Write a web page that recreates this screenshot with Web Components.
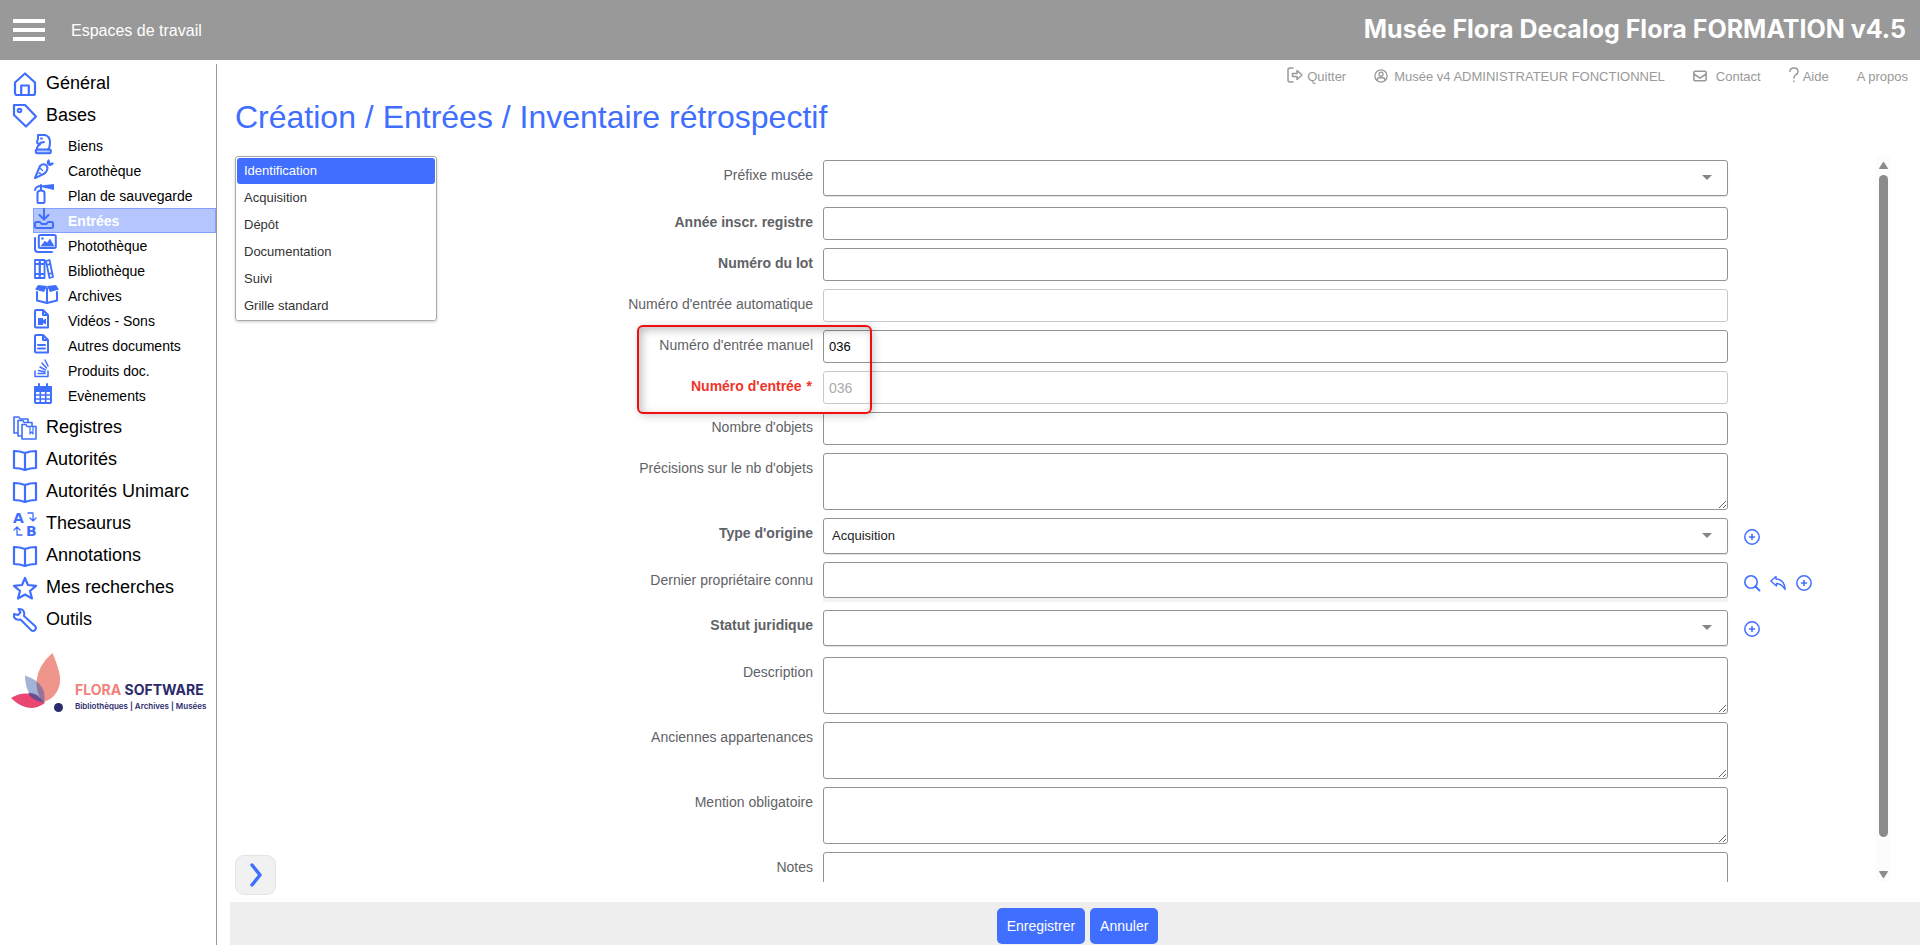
<!DOCTYPE html>
<html lang="fr">
<head>
<meta charset="utf-8">
<title>Création / Entrées / Inventaire rétrospectif</title>
<style>
    html, body {
        height: 100%;
        margin: 0;
    }

    body {
        font-family: "Liberation Sans", Arial, sans-serif;
        font-size: 14px;
        color: #000;
        background: #fff;
        --blue: #406eff;
        --grey: #999;
    }
</style>
</head>
<body>

<flora-app>
    <flora-header slot="header" workspace="Espaces de travail">Musée Flora Decalog Flora FORMATION v4.5</flora-header>

    <flora-menu slot="menu">
        <menu-entry icon="home">Général</menu-entry>
        <menu-entry icon="tag">Bases</menu-entry>
        <menu-group>
            <menu-item icon="knight">Biens</menu-item>
            <menu-item icon="carrot">Carothèque</menu-item>
            <menu-item icon="extinguisher">Plan de sauvegarde</menu-item>
            <menu-item icon="inbox" active>Entrées</menu-item>
            <menu-item icon="images">Photothèque</menu-item>
            <menu-item icon="books">Bibliothèque</menu-item>
            <menu-item icon="box">Archives</menu-item>
            <menu-item icon="filevideo">Vidéos - Sons</menu-item>
            <menu-item icon="filetext">Autres documents</menu-item>
            <menu-item icon="stack">Produits doc.</menu-item>
            <menu-item icon="calendar">Evènements</menu-item>
        </menu-group>
        <menu-entry icon="registers">Registres</menu-entry>
        <menu-entry icon="book">Autorités</menu-entry>
        <menu-entry icon="book">Autorités Unimarc</menu-entry>
        <menu-entry icon="thesaurus">Thesaurus</menu-entry>
        <menu-entry icon="book">Annotations</menu-entry>
        <menu-entry icon="star">Mes recherches</menu-entry>
        <menu-entry icon="wrench">Outils</menu-entry>
        <flora-logo></flora-logo>
    </flora-menu>

    <user-links slot="links"></user-links>

    <span slot="title">Création / Entrées / Inventaire rétrospectif</span>

    <tab-list slot="tabs"></tab-list>

    <form-scroll slot="form">
        <form-field type="select" loose>Préfixe musée</form-field>
        <form-field strong>Année inscr. registre</form-field>
        <form-field strong>Numéro du lot</form-field>
        <form-field disabled>Numéro d'entrée automatique</form-field>
        <field-callout>
            <form-field value="036">Numéro d'entrée manuel</form-field>
            <form-field value="036" strong disabled required>Numéro d'entrée</form-field>
        </field-callout>
        <form-field>Nombre d'objets</form-field>
        <form-field type="textarea">Précisions sur le nb d'objets</form-field>
        <form-field type="select" value="Acquisition" actions="plus" strong>Type d'origine</form-field>
        <form-field type="lookup" actions="search reply plus">Dernier propriétaire connu</form-field>
        <form-field type="select" actions="plus" strong loose>Statut juridique</form-field>
        <form-field type="textarea">Description</form-field>
        <form-field type="textarea">Anciennes appartenances</form-field>
        <form-field type="textarea">Mention obligatoire</form-field>
        <form-field type="textarea">Notes</form-field>
    </form-scroll>

    <form-actions slot="footer"></form-actions>
</flora-app>

<script>
    // every icon is drawn with currentColor
    const ICONS = {
        home: ['0 0 24 24', '<path d="M2 10.5 12 1.5l10 9V21a2 2 0 0 1-2 2H4a2 2 0 0 1-2-2z" stroke-width="2.2"/><path d="M8.2 23v-9.500h7.6V23" stroke-width="2.2"/>'],
        tag: ['0 0 24 24', '<path d="M1 1h11l11 11.500L13 22.500 1 11z" stroke-width="2.200"/><circle cx="6.500" cy="6.500" r="1.800"/>'],
        registers: ['0 0 24 24', '<g fill="#fff" stroke-width="1.600"><path d="M1 1h5l1 2h8v14H1z"/><path d="M5 4.500h5l1 2h8V20H5z"/><path d="M9 8.500h4l1 2h9V23H9z"/><path d="M17 11v7l1.500-2 1.500 2v-7" stroke-width="1.200"/></g>'],
        book: ['0 0 24 24', '<path d="M1 3q6 0 11 2 5-2 11-2v17q-6 0-11 2-5-2-11-2zM12 5v17" stroke-width="2.200"/>'],
        thesaurus: ['0 0 24 24', '<g fill="currentColor" stroke="none" font-family="DejaVu Sans" font-weight="bold" font-size="14"><text x="0" y="11">A</text><text x="13" y="24">B</text></g><path d="M15 1h5v8m-3-3 3 3 3-3M9 23H4v-8m-3 3 3-3 3 3" stroke-width="1.300"/>'],
        star: ['0 0 24 24', '<path d="m12 2 3 7 8 .8-6 5.200 2 7.500-7-4-7 4 2-7.500-6-5.200L9 9z" stroke-width="2.200"/>'],
        wrench: ['0 0 24 24', '<path d="M1 6v3q2 3.500 6.500 2.500L18 22q2 2 4 0t0-4L11 8Q12 3.500 9 1.500L5.500 1l2 3.500L5 7z" stroke-width="2"/>'],
        knight: ['0 0 24 20', '<path d="M3 15.500q-.5-3 3-5-3-.5-3-3l1-2.500V1h7q5 1.500 5 7t-2 7.500"/><path d="m6 9 4-1M7 4.500h1"/><rect x="1.800" y="15.500" width="15" height="3.700" rx="1" fill="currentColor" fill-opacity=".35"/>'],
        carrot: ['0 0 24 20', '<path d="M1 19 6 7q3-3 6-1 3 3 0 7-2 2-4.500 3.200z"/><path d="m6 9 2.500 2.500M5 14l2 1" stroke-width="1.400"/><path d="M13 5q-1-3 2-5 1 2 1 4 2-1 4 0-1 3-5 3z" fill="currentColor" stroke="none"/>'],
        extinguisher: ['0 0 24 20', '<path d="M3.500 18V9q0-2.500 3.500-2.500T10.500 9v9q0 1-1 1h-5q-1 0-1-1zM7 6.500V1M1 6q1-4 6-4"/><path d="M7 1.500 20 0v6L7 3z" fill="currentColor" stroke="none"/>'],
        inbox: ['0 0 24 20', '<path d="M10 0v10M5.500 6l4.500 4.500L14.500 6"/><path d="M6 13H2.500Q1 13 1 14.500V18q0 1 1.500 1h15q1.500 0 1.500-1v-3.500Q19 13 17.500 13H14l-1.500 2h-5z"/>'],
        images: ['0 0 24 20', '<path d="M1 4v11q0 3 3 3h14"/><rect x="4.800" y="1" width="17" height="13" rx="1.500"/><path d="m7 12 4-5 2 2 3-4 4 7z" fill="currentColor" stroke-width=".5"/><circle cx="8.500" cy="4.500" r="1.200" fill="currentColor" stroke="none"/>'],
        books: ['0 0 24 20', '<path d="M1 1h4.500v18H1zM6 1h4.500v18H6zM12 2l3.500-1 3.500 17-3.500 1zM1 5h9M1 15h9M13 6l3-.8M15 15l3-.8" stroke-width="1.800"/>'],
        box: ['0 0 24 20', '<path d="M3 8v8.500L13 19l10-2.500V8M13 4v15"/><path d="m4 1 9 1-3 6-9-2.500zM22 1l-9 1 3 6 9-2.500z" fill="currentColor" stroke="none"/>'],
        filevideo: ['0 0 24 20', '<path d="M2 1h7l5 5v12.500H2q-1 0-1-1V2q0-1 1-1zM9 1v5h5"/><path d="M4 9h5v2l3-1.500v6L9 14v2H4z" fill="currentColor" stroke="none"/>'],
        filetext: ['0 0 24 20', '<path d="M2 1h7l5 5v12.500H2q-1 0-1-1V2q0-1 1-1zM9 1v5h5M4 11h7M4 14.500h7"/>'],
        stack: ['0 0 24 20', '<path d="M1 12v5.500h13V12M4 14.500h7M4.500 11.500l6.500 1.500M6 8l5.500 3M8 4l4.500 5M11 1l3 6" stroke-width="1.500"/>'],
        calendar: ['0 0 24 20', '<path d="M5 0v4M13 0v4"/><rect x="1" y="3" width="16" height="16" rx="1"/><path d="M1 3h16v4H1z" fill="currentColor"/><path d="M1 11h16M1 15h16M6.300 5v14M11.700 5v14" stroke-width="1.600"/>'],
        quit: ['0 0 16 16', '<path d="M6 1H3Q1 1 1 3v10q0 2 2 2h3" stroke-width="1.500"/><path d="M5.500 6.500H10v-3L15 8l-5 4.500v-3H5.500z" stroke-width="1.500"/>'],
        user: ['0 0 16 16', '<circle cx="8" cy="8" r="7" stroke-width="1.500"/><circle cx="8" cy="6" r="2.300" stroke-width="1.500"/><path d="M3.500 13q0-3 2.500-3h4q2.500 0 2.500 3" stroke-width="1.500"/>'],
        mail: ['0 0 16 16', '<rect x="1" y="2.500" width="14" height="11" rx="1.500" stroke-width="1.800"/><path d="m1.500 6 6.500 4.500L14.500 6" stroke-width="1.800"/>'],
        help: ['0 0 10 16', '<path d="M1 4.500Q1 1 5 1t4 3.500Q9 6.500 6.500 8 5 9 5 11M5 14v.5" stroke-width="1.500"/>'],
        plus: ['0 0 16 16', '<circle cx="8" cy="8" r="7.200" stroke-width="1.500"/><path d="M8 5.500v5M5.500 8h5" stroke-width="1.600"/>'],
        search: ['0 0 16 16', '<circle cx="7" cy="7" r="6.200" stroke-width="1.600"/><path d="m11.500 11.500 4 4" stroke-width="1.800"/>'],
        reply: ['0 0 16 16', '<path d="M.8 6 6 1.500V4q8.500.5 9.200 10.500Q12 9 6.500 8.500V11z" stroke-width="1.400"/>'],
        chevron: ['0 0 12 24', '<path d="m2 2 8 10-8 10" stroke-width="3.500"/>']
    };

    class XIcon extends HTMLElement {
        constructor() {
            super();
            this.shadow = this.attachShadow({ mode: 'open' });
        }
        connectedCallback() {
            const [box, shapes] = ICONS[this.getAttribute('name')];
            this.shadow.innerHTML = `
                <style>
                    :host {
                        display: block;
                        flex: none;
                    }
                    svg {
                        display: block;
                        width: 100%;
                        height: 100%;
                        overflow: visible;
                        fill: none;
                        stroke: currentColor;
                        stroke-width: 2;
                        stroke-linejoin: round;
                        stroke-linecap: round;
                    }
                </style>
                <svg viewBox="${box}" aria-hidden="true">${shapes}</svg>
            `;
        }
    }
    customElements.define('x-icon', XIcon);

    class FloraApp extends HTMLElement {
        constructor() {
            super();
            this.shadow = this.attachShadow({ mode: 'open' });
            this.shadow.innerHTML = `
                <style>
                    :host {
                        display: grid;
                        grid-template-columns: 217px minmax(0, 1fr);
                        grid-template-rows: auto minmax(0, 1fr);
                        height: 100vh;
                    }
                    header {
                        grid-column: 1 / 3;
                    }
                    aside {
                        display: grid;
                        padding-top: 4px;
                    }
                    main {
                        display: flex;
                        flex-direction: column;
                        padding-left: 13px;
                        min-height: 0;
                    }
                    h1 {
                        margin: 0 0 19px 5px;
                        font-size: 32px;
                        line-height: 40px;
                        font-weight: normal;
                        color: var(--blue);
                    }
                    .body {
                        display: flex;
                        flex: 1;
                        min-height: 0;
                        padding: 0 29px 20px 5px;
                    }
                    .tools {
                        display: flex;
                        flex-direction: column;
                        justify-content: space-between;
                        flex: none;
                        width: 202px;
                        margin-bottom: -13px;
                    }
                    .form {
                        flex: 1;
                        display: grid;
                        min-width: 0;
                        min-height: 0;
                    }
                    .expand {
                        display: flex;
                        align-items: center;
                        justify-content: center;
                        width: 41px;
                        height: 40px;
                        padding: 0;
                        border: 1px solid #e4e4e4;
                        border-radius: 9px;
                        background: #f1f1f1;
                        color: var(--blue);
                    }
                    .expand x-icon {
                        width: 12px;
                        height: 24px;
                    }
                </style>
                <header><slot name="header"></slot></header>
                <aside><slot name="menu"></slot></aside>
                <main>
                    <slot name="links"></slot>
                    <h1><slot name="title"></slot></h1>
                    <div class="body">
                        <div class="tools">
                            <slot name="tabs"></slot>
                            <button class="expand" type="button" aria-label="Suivant"><x-icon name="chevron"></x-icon></button>
                        </div>
                        <div class="form"><slot name="form"></slot></div>
                    </div>
                    <slot name="footer"></slot>
                </main>
            `;
        }
    }
    customElements.define('flora-app', FloraApp);

    class FloraHeader extends HTMLElement {
        constructor() {
            super();
            this.shadow = this.attachShadow({ mode: 'open' });
        }
        connectedCallback() {
            this.shadow.innerHTML = `
                <style>
                    :host {
                        display: flex;
                        align-items: center;
                        height: 60px;
                        padding: 0 14px 0 13px;
                        box-sizing: border-box;
                        background: var(--grey);
                        color: #fff;
                    }
                    button {
                        display: flex;
                        flex-direction: column;
                        gap: 5px;
                        width: 32px;
                        margin-right: 26px;
                        padding: 0;
                        border: 0;
                        background: none;
                    }
                    button span {
                        height: 4px;
                        width: 100%;
                        background: #fff;
                    }
                    a {
                        flex: 1;
                        padding-top: 2px;
                        font-size: 16px;
                        color: inherit;
                        text-decoration: none;
                    }
                    strong {
                        font-family: Inter, sans-serif;
                        font-size: 25px;
                        line-height: 28px;
                        font-weight: 700;
                        padding-bottom: 2px;
                    }
                </style>
                <button type="button" aria-label="Menu"><span></span><span></span><span></span></button>
                <a href="#">${this.getAttribute('workspace')}</a>
                <strong><slot></slot></strong>
            `;
        }
    }
    customElements.define('flora-header', FloraHeader);

    class FloraMenu extends HTMLElement {
        constructor() {
            super();
            this.shadow = this.attachShadow({ mode: 'open' });
            this.shadow.innerHTML = `
                <style>
                    :host {
                        display: block;
                        border-right: 1px solid var(--grey);
                    }
                    nav {
                        display: flex;
                        flex-direction: column;
                        padding-top: 3px;
                    }
                </style>
                <nav><slot></slot></nav>
            `;
        }
    }
    customElements.define('flora-menu', FloraMenu);

    class MenuEntry extends HTMLElement {
        constructor() {
            super();
            this.shadow = this.attachShadow({ mode: 'open' });
        }
        connectedCallback() {
            this.shadow.innerHTML = `
                <style>
                    :host {
                        display: block;
                        padding-left: 13px;
                    }
                    a {
                        display: flex;
                        gap: 9px;
                        height: 32px;
                        font-size: 18px;
                        line-height: 32px;
                        color: inherit;
                        text-decoration: none;
                    }
                    x-icon {
                        width: 24px;
                        height: 24px;
                        margin-top: 5px;
                        color: var(--blue);
                    }
                </style>
                <a href="#"><x-icon name="${this.getAttribute('icon')}"></x-icon><slot></slot></a>
            `;
        }
    }
    customElements.define('menu-entry', MenuEntry);

    class MenuGroup extends HTMLElement {
        constructor() {
            super();
            this.shadow = this.attachShadow({ mode: 'open' });
            this.shadow.innerHTML = `
                <style>
                    :host {
                        display: flex;
                        flex-direction: column;
                        padding: 2px 0 3px 33px;
                    }
                </style>
                <slot></slot>
            `;
        }
    }
    customElements.define('menu-group', MenuGroup);

    class MenuItem extends HTMLElement {
        constructor() {
            super();
            this.shadow = this.attachShadow({ mode: 'open' });
        }
        connectedCallback() {
            this.shadow.innerHTML = `
                <style>
                    :host {
                        display: block;
                    }
                    a {
                        display: flex;
                        gap: 10px;
                        height: 25px;
                        box-sizing: border-box;
                        border: 1px solid transparent;
                        font-size: 14px;
                        line-height: 25px;
                        color: inherit;
                        text-decoration: none;
                    }
                    :host([active]) a {
                        border-color: #83a0ff;
                        background: #b5c6ff;
                        color: #fff;
                        font-weight: bold;
                    }
                    x-icon {
                        width: 24px;
                        height: 20px;
                        color: var(--blue);
                    }
                </style>
                <a href="#"><x-icon name="${this.getAttribute('icon')}"></x-icon><slot></slot></a>
            `;
        }
    }
    customElements.define('menu-item', MenuItem);

    class FloraLogo extends HTMLElement {
        constructor() {
            super();
            this.shadow = this.attachShadow({ mode: 'open' });
            this.shadow.innerHTML = `
                <style>
                    :host {
                        display: flex;
                        align-items: flex-end;
                        gap: 11px;
                        padding: 18px 0 0 11px;
                        font-family: Inter, sans-serif;
                        color: #2b2a6b;
                    }
                    svg {
                        width: 53px;
                        height: 60px;
                    }
                    div {
                        white-space: nowrap;
                    }
                    strong {
                        display: block;
                        font-size: 14px;
                        line-height: 18px;
                        font-weight: 700;
                    }
                    em {
                        font-style: normal;
                        color: #f0827a;
                    }
                    small {
                        display: block;
                        font-size: 8px;
                        line-height: 14px;
                        font-weight: 600;
                    }
                </style>
                <svg viewBox="0 0 53 60" aria-hidden="true">
                    <path d="M0 45q19-11 34 5Q17 62 0 45z" fill="#e94672"/>
                    <path d="M41.500 0Q50 20 49 29q-2 15-16 20Q25 40 25.500 28 27 12 41.500 0z" fill="#f0958b"/>
                    <path d="M14 22.500q22 7 19 27-19-4-19-27z" fill="#6f8cc0" fill-opacity=".65"/>
                    <path d="M25.500 29Q36 36 33 49.500 25 42 25.500 29z" fill="#94618b" fill-opacity=".6"/>
                    <path d="M17 39.500q10 0 16 10-13-2-16-10z" fill="#5a4488" fill-opacity=".8"/>
                    <circle cx="47.500" cy="54.500" r="4.500" fill="#2b2a6b"/>
                </svg>
                <div>
                    <strong><em>FLORA</em> SOFTWARE</strong>
                    <small>Bibliothèques | Archives | Musées</small>
                </div>
            `;
        }
    }
    customElements.define('flora-logo', FloraLogo);

    class UserLinks extends HTMLElement {
        constructor() {
            super();
            this.shadow = this.attachShadow({ mode: 'open' });
            this.shadow.innerHTML = `
                <style>
                    :host {
                        display: flex;
                        justify-content: flex-end;
                        gap: 28px;
                        height: 37px;
                        padding-right: 12px;
                        font-size: 13px;
                        line-height: 33px;
                        color: var(--grey);
                    }
                    a {
                        display: flex;
                        gap: 4px;
                        color: inherit;
                        text-decoration: none;
                    }
                    x-icon {
                        width: 16px;
                        height: 16px;
                        margin-top: 7px;
                    }
                    .small x-icon {
                        width: 14px;
                        height: 14px;
                        margin-top: 9px;
                    }
                    .small {
                        gap: 6px;
                    }
                    .wide {
                        gap: 9px;
                    }
                    .help x-icon {
                        width: 10px;
                    }
                </style>
                <a href="#"><x-icon name="quit"></x-icon>Quitter</a>
                <a href="#" class="small"><x-icon name="user"></x-icon>Musée v4 ADMINISTRATEUR FONCTIONNEL</a>
                <a href="#" class="small wide"><x-icon name="mail"></x-icon>Contact</a>
                <a href="#" class="help"><x-icon name="help"></x-icon>Aide</a>
                <a href="#">A propos</a>
            `;
        }
    }
    customElements.define('user-links', UserLinks);

    class TabList extends HTMLElement {
        constructor() {
            super();
            this.shadow = this.attachShadow({ mode: 'open' });
            const tabs = ['Identification', 'Acquisition', 'Dépôt', 'Documentation', 'Suivi', 'Grille standard'];
            this.shadow.innerHTML = `
                <style>
                    :host {
                        display: flex;
                        flex-direction: column;
                        gap: 1px;
                        padding: 1px;
                        border: 1px solid #aaa;
                        border-radius: 3px;
                        box-shadow: 0 1px 3px rgba(0, 0, 0, .2);
                    }
                    button {
                        height: 26px;
                        padding: 0 7px;
                        border: 0;
                        border-radius: 3px;
                        background: none;
                        font: 13px/26px "Liberation Sans", Arial, sans-serif;
                        text-align: left;
                        color: #333;
                    }
                    button.current {
                        background: var(--blue);
                        color: #fff;
                    }
                </style>
                ${tabs.map((t, i) => `<button type="button" class="${i ? '' : 'current'}">${t}</button>`).join('')}
            `;
        }
    }
    customElements.define('tab-list', TabList);

    class FormScroll extends HTMLElement {
        constructor() {
            super();
            this.shadow = this.attachShadow({ mode: 'open' });
            this.shadow.innerHTML = `
                <style>
                    :host {
                        display: flex;
                        min-height: 0;
                        padding-top: 1px;
                    }
                    .fields {
                        display: flex;
                        flex-direction: column;
                        gap: 8px;
                        flex: 1;
                        min-width: 0;
                        padding-top: 3px;
                        overflow-y: auto;
                        scrollbar-width: none;
                    }
                    .bar {
                        display: flex;
                        flex-direction: column;
                        align-items: center;
                        gap: 6px;
                        width: 15px;
                        padding: 5px 0 4px;
                        box-sizing: border-box;
                        background: #fcfcfc;
                    }
                    svg {
                        display: block;
                        width: 9px;
                        height: 7px;
                        fill: #8b8b8b;
                    }
                    .track {
                        flex: 1;
                        width: 9px;
                    }
                    .thumb {
                        height: 96%;
                        border-radius: 5px;
                        background: #8b8b8b;
                    }
                </style>
                <div class="fields"><slot></slot></div>
                <div class="bar" aria-hidden="true">
                    <svg viewBox="0 0 9 7"><path d="M3.800.6q.7-1 1.400 0L8.800 6q.4 1-.6 1H.8q-1 0-.6-1z"/></svg>
                    <div class="track"><div class="thumb"></div></div>
                    <svg viewBox="0 0 9 7"><path d="M3.800 6.400q.7 1 1.400 0L8.800 1q.4-1-.6-1H.8q-1 0-.6 1z"/></svg>
                </div>
            `;
        }
    }
    customElements.define('form-scroll', FormScroll);

    // red frame laid over a run of fields, from the label column to the start of the input
    class FieldCallout extends HTMLElement {
        constructor() {
            super();
            this.shadow = this.attachShadow({ mode: 'open' });
            this.shadow.innerHTML = `
                <style>
                    :host {
                        position: relative;
                        display: flex;
                        flex-direction: column;
                        gap: 8px;
                    }
                    .frame {
                        position: absolute;
                        top: -5px;
                        bottom: -10px;
                        left: 200px;
                        width: 235px;
                        box-sizing: border-box;
                        border: 2px solid #f00f0f;
                        border-radius: 6px;
                        box-shadow: 2px 2px 8px rgba(0, 0, 0, .2), inset 3px 3px 8px rgba(0, 0, 0, .25);
                        pointer-events: none;
                        z-index: 1;
                    }
                </style>
                <slot></slot>
                <div class="frame"></div>
            `;
        }
    }
    customElements.define('field-callout', FieldCallout);

    class FormField extends HTMLElement {
        constructor() {
            super();
            this.shadow = this.attachShadow({ mode: 'open' });
        }
        connectedCallback() {
            this.render();
        }

        control() {
            const value = this.getAttribute('value') || '';
            const disabled = this.hasAttribute('disabled') ? 'disabled' : '';
            switch (this.getAttribute('type')) {
                case 'select':
                    return `<select id="control"><option>${value}</option></select><span class="arrow"></span>`;
                case 'textarea':
                    return '<textarea id="control"></textarea>';
                default:
                    return `<input id="control" type="text" value="${value}" ${disabled}>`;
            }
        }

        render() {
            const names = { plus: 'Ajouter', search: 'Rechercher', reply: 'Rétablir' };
            const actions = (this.getAttribute('actions') || '').split(' ').filter(Boolean);
            this.shadow.innerHTML = `
                <style>
                    :host {
                        display: grid;
                        grid-template-columns: 376px minmax(0, 1fr) 148px;
                        flex: none;
                    }
                    :host([loose]) {
                        margin-bottom: 3px;
                    }
                    label {
                        padding: 7px 0;
                        line-height: 16px;
                        text-align: right;
                        color: #5f6266;
                    }
                    label span {
                        margin: 0 1px;
                    }
                    :host([type=lookup]) label {
                        padding-top: 10px;
                    }
                    :host([strong]) label {
                        font-weight: bold;
                    }
                    :host([required]) label {
                        color: #f0342a;
                    }
                    .box {
                        position: relative;
                        display: grid;
                        margin-left: 10px;
                    }
                    input, select, textarea {
                        box-sizing: border-box;
                        width: 100%;
                        height: 33px;
                        margin: 0;
                        padding: 0 5px;
                        border: 1px solid #939393;
                        border-radius: 3px;
                        background: #fff;
                        font: 13px "Liberation Sans", Arial, sans-serif;
                        color: #000;
                    }
                    input:disabled {
                        border-color: #c9c9c9;
                        font-size: 14px;
                        color: #aaa;
                    }
                    select {
                        appearance: none;
                        height: 36px;
                        padding: 0 8px 2px;
                        box-shadow: 0 1px 1px rgba(0, 0, 0, .12);
                        color: #222;
                    }
                    textarea {
                        display: block;
                        height: 57px;
                        resize: vertical;
                    }
                    :host([type=lookup]) input {
                        height: 36px;
                    }
                    :host([type=lookup]) .box {
                        padding-bottom: 4px;
                        background: #f3f3f3;
                    }
                    .arrow {
                        position: absolute;
                        right: 16px;
                        top: 15px;
                        border: 5px solid transparent;
                        border-top-color: #858585;
                        border-bottom: 0;
                        pointer-events: none;
                    }
                    .actions {
                        display: flex;
                        align-items: center;
                        gap: 10px;
                        padding: 2px 0 0 16px;
                    }
                    .actions button {
                        width: 16px;
                        height: 16px;
                        padding: 0;
                        border: 0;
                        background: none;
                        color: var(--blue);
                    }
                    .actions x-icon {
                        width: 16px;
                        height: 16px;
                    }
                </style>
                <label for="control"><slot></slot>${this.hasAttribute('required') ? ' <span>*</span>' : ''}</label>
                <div class="box">${this.control()}</div>
                <div class="actions">
                    ${actions.map(a => `<button type="button" aria-label="${names[a]}"><x-icon name="${a}"></x-icon></button>`).join('')}
                </div>
            `;
        }
    }
    customElements.define('form-field', FormField);

    class FormActions extends HTMLElement {
        constructor() {
            super();
            this.shadow = this.attachShadow({ mode: 'open' });
            this.shadow.innerHTML = `
                <style>
                    :host {
                        display: flex;
                        justify-content: center;
                        padding: 6px 0 1px;
                        background: #eee;
                    }
                    button {
                        height: 36px;
                        margin-left: 5px;
                        padding: 0 10px;
                        border: 0;
                        border-radius: 5px;
                        background: var(--blue);
                        font: 14px "Liberation Sans", Arial, sans-serif;
                        color: #fff;
                    }
                </style>
                <button type="submit">Enregistrer</button>
                <button type="button">Annuler</button>
            `;
        }
    }
    customElements.define('form-actions', FormActions);
</script>
</body>
</html>
